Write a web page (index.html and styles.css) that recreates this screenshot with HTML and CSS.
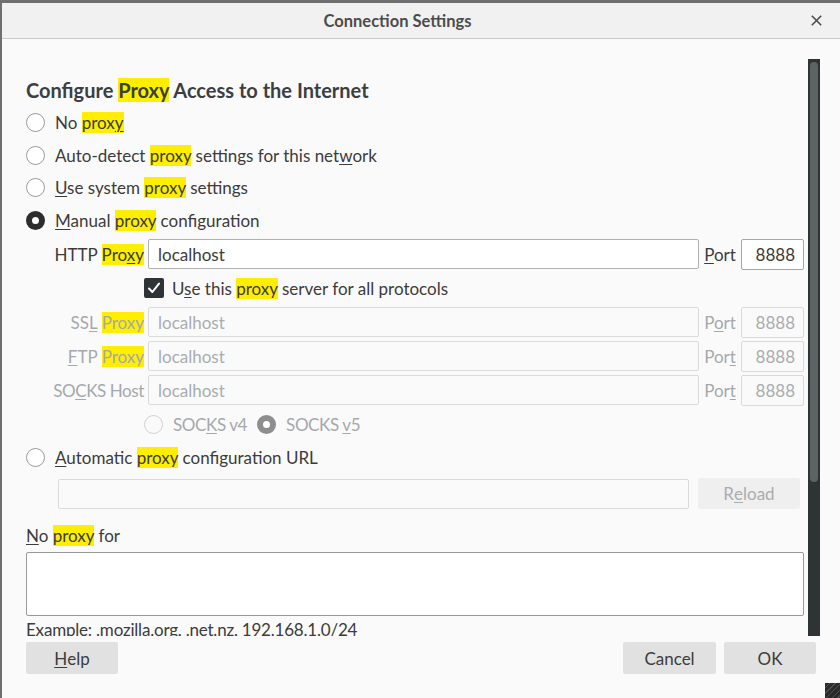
FILE: index.html
```html
<!DOCTYPE html>
<html lang="en">
<head>
<meta charset="utf-8">
<title>Connection Settings</title>
<link rel="stylesheet" href="styles.css">
</head>
<body>
<div class="dialog">
  <header class="titlebar">
    <span class="title">Connection Settings</span>
    <span class="close"><svg width="11" height="11" viewBox="0 0 11 11"><path d="M0.8 0.8 L10.2 10.2 M10.2 0.8 L0.8 10.2" stroke="#4c4c4c" stroke-width="1.6" fill="none"/></svg></span>
  </header>
  <main class="scroll">
    <h1 class="heading">Configure <mark>Proxy</mark> Access to the Internet</h1>
    <div class="radios">
      <div class="radio-row"><span class="radio"></span><span>No <mark>prox<u>y</u></mark></span></div>
      <div class="radio-row"><span class="radio"></span><span>Auto-detect <mark>proxy</mark> settings for this net<u>w</u>ork</span></div>
      <div class="radio-row"><span class="radio"></span><span><u>U</u>se system <mark>proxy</mark> settings</span></div>
      <div class="radio-row"><span class="radio on"></span><span><u>M</u>anual <mark>proxy</mark> configuration</span></div>
    </div>
    <div class="proxy-grid">
      <span class="lbl">HTTP <mark>Pro<u>x</u>y</mark></span>
      <span class="field">localhost</span>
      <span class="port-lbl"><u>P</u>ort</span>
      <span class="field port">8888</span>

      <div class="check-row"><span class="checkbox"><svg width="20" height="20" viewBox="0 0 20 20"><path d="M5 10.5 L8.4 14 L15 5.6" stroke="#fff" stroke-width="2" fill="none" stroke-linecap="round" stroke-linejoin="round"/></svg></span><span>U<u>s</u>e this <mark>proxy</mark> server for all protocols</span></div>

      <span class="lbl dis">SS<u>L</u> <mark>Proxy</mark></span>
      <span class="field dis">localhost</span>
      <span class="port-lbl dis">P<u>o</u>rt</span>
      <span class="field port dis">8888</span>

      <span class="lbl dis"><u>F</u>TP <mark>Proxy</mark></span>
      <span class="field dis">localhost</span>
      <span class="port-lbl dis">Por<u>t</u></span>
      <span class="field port dis">8888</span>

      <span class="lbl dis caps">SO<u>C</u>KS Host</span>
      <span class="field dis">localhost</span>
      <span class="port-lbl dis">Por<u>t</u></span>
      <span class="field port dis">8888</span>

      <div class="socks-row dis">
        <span class="radio dis"></span><span class="caps">SOC<u>K</u>S v4</span>
        <span class="radio dis on v5"></span><span class="caps">SOCKS <u>v</u>5</span>
      </div>
    </div>
    <div class="radio-row auto"><span class="radio"></span><span><u>A</u>utomatic <mark>proxy</mark> configuration URL</span></div>
    <div class="url-row">
      <span class="field url dis"></span>
      <span class="btn dis">R<u>e</u>load</span>
    </div>
    <div class="noproxy"><u>N</u>o <mark>proxy</mark> for</div>
    <div class="textarea"></div>
    <div class="example">Example: .mozilla.org, .net.nz, 192.168.1.0/24</div>
    <div class="scrollbar"><div class="thumb"></div></div>
  </main>
  <footer class="buttons">
    <span class="btn help"><u>H</u>elp</span>
    <span class="spacer"></span>
    <span class="btn cancel">Cancel</span>
    <span class="btn ok">OK</span>
  </footer>
</div>
<div class="grip"></div>
</body>
</html>
```
FILE: styles.css
```css
html, body {
  margin: 0;
  padding: 0;
}
body {
  width: 840px;
  height: 698px;
  overflow: hidden;
  background: #6f6f6f;
  font-family: "Lato", "Noto Sans", sans-serif;
  font-size: 17px;
  color: #3c3c3c;
  position: relative;
}
.dialog {
  position: relative;
  margin: 3px 0 0 2px;
  width: 838px;
  height: 695px;
  background: #fafafa;
  overflow: hidden;
}
.titlebar {
  height: 35px;
  background: #f1f1f1;
  border-bottom: 1px solid #c9c9c9;
  display: grid;
  grid-template-columns: 791px 47px;
  align-items: center;
}
.title {
  text-align: center;
  font-weight: 700;
  font-size: 16.5px;
  color: #4c4c4c;
}
.close {
  display: flex;
  justify-content: center;
  align-items: center;
}
.close svg { display: block; }

mark {
  background: #ffee00;
  color: inherit;
}
u {
  text-decoration-thickness: 1px;
  text-underline-offset: 2px;
}
.caps {
  letter-spacing: -0.4px;
}

.scroll {
  position: relative;
  height: 597px;
  overflow: hidden;
  padding-left: 24px;
  box-sizing: border-box;
}
.heading {
  margin: 40px 0 5px;
  font-size: 20px;
  line-height: 22px;
  font-weight: 700;
  color: #3b3f42;
}
.radios {
  display: flex;
  flex-direction: column;
}
.radio-row {
  height: 32.75px;
  display: flex;
  align-items: center;
}
.radio {
  width: 19px;
  height: 19px;
  box-sizing: border-box;
  border: 1px solid #9a9a9a;
  border-radius: 50%;
  background: #fff;
  margin-right: 10px;
  flex: none;
}
.radio.on {
  border: 6px solid #2d2d2d;
}
.radio.dis {
  border-color: #d2d2d2;
  background: #fafafa;
}
.radio.dis.on {
  border: 6px solid #8e8e8e;
  background: #fff;
}

.proxy-grid {
  display: grid;
  grid-template-columns: 122px 551px 42px 63px;
  grid-auto-rows: 34px;
  align-items: center;
}
.lbl {
  text-align: right;
  padding-right: 4px;
  white-space: nowrap;
}
.dis {
  color: #a5a9ac;
}
.field {
  height: 30px;
  box-sizing: border-box;
  border: 1px solid #b0b0b0;
  border-radius: 2px;
  background: #fff;
  padding: 0 9px;
  display: flex;
  align-items: center;
}
.field.port {
  height: 31px;
  justify-content: flex-end;
  padding: 0 8px 0 0;
  border-color: #a5a5a5;
}
.field.dis {
  border-color: #dadada;
  background: #fafafa;
  color: #a9adb0;
}
.port-lbl {
  text-align: center;
}
.check-row {
  grid-column: 2 / 5;
  margin-left: -4px;
  display: flex;
  align-items: center;
}
.checkbox {
  width: 20px;
  height: 20px;
  border-radius: 2px;
  background: #2e3436;
  margin-right: 8px;
  flex: none;
}
.checkbox svg { display: block; }
.socks-row {
  grid-column: 2 / 5;
  margin-left: -4px;
  display: flex;
  align-items: center;
}
.radio.v5 {
  margin-left: 10px;
}
.radio-row.auto {
  height: 33px;
}
.url-row {
  margin: 4px 0 0 32px;
  height: 31px;
  display: flex;
  align-items: center;
  gap: 9px;
}
.field.url {
  width: 631px;
  height: 30px;
}
.btn {
  height: 31px;
  border-radius: 2px;
  background: #e1e1e1;
  display: flex;
  align-items: center;
  justify-content: center;
  color: #3c3c3c;
}
.btn.dis {
  width: 102px;
  background: #efefef;
  color: #a9adb0;
}
.noproxy {
  margin-top: 15px;
  line-height: 24px;
}
.textarea {
  margin-top: 4px;
  width: 778px;
  height: 64px;
  box-sizing: border-box;
  border: 1px solid #989898;
  border-radius: 2px;
  background: #fff;
}
.example {
  margin-top: 4px;
  line-height: 20px;
  letter-spacing: -0.2px;
}
.scrollbar {
  position: absolute;
  top: 20px;
  bottom: 0;
  right: 20px;
  width: 12px;
  background: #2e3436;
}
.thumb {
  margin: 3px 0 0 2px;
  width: 8px;
  height: 420px;
  border-radius: 4px;
  background: #5d6264;
}
.buttons {
  display: flex;
  padding: 6px 24px 0;
  gap: 8px;
}
.buttons .btn {
  height: 32px;
}
.help { width: 92px; }
.spacer { flex: 1; }
.cancel { width: 93px; }
.ok { width: 92px; }
.grip {
  position: absolute;
  right: 0;
  bottom: 0;
  width: 15px;
  height: 15px;
  background: repeating-linear-gradient(135deg, #2a2a2a 0 3px, #4d4d4d 3px 4px);
}
```
